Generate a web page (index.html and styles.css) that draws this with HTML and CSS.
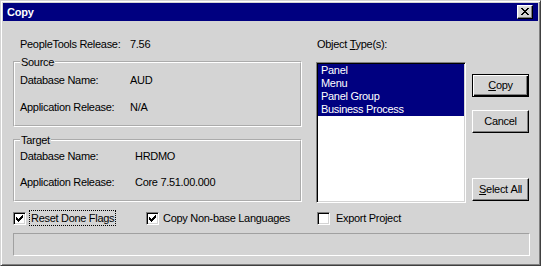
FILE: index.html
```html
<!DOCTYPE html>
<html lang="en">
<head>
<meta charset="utf-8">
<title>Copy</title>
<link rel="stylesheet" href="styles.css">
</head>
<body>
<div class="window">
  <div class="titlebar">
    <span class="title">Copy</span>
    <button class="close" aria-label="Close">
      <svg width="8" height="7" viewBox="0 0 8 7" shape-rendering="crispEdges"><path d="M0 0h2v1h-2zM6 0h2v1h-2zM1 1h2v1h-2zM5 1h2v1h-2zM2 2h4v1h-4zM3 3h2v1h-2zM2 4h4v1h-4zM1 5h2v1h-2zM5 5h2v1h-2zM0 6h2v1h-2zM6 6h2v1h-2z" fill="#000"/></svg>
    </button>
  </div>
  <div class="client">
    <div class="top">
      <div class="left">
        <div class="row info"><span class="lbl lbl-info">PeopleTools Release:</span><span>7.56</span></div>
        <fieldset class="group source">
          <legend>Source</legend>
          <div class="row"><span class="lbl lbl-src">Database Name:</span><span>AUD</span></div>
          <div class="row row-2"><span class="lbl lbl-src">Application Release:</span><span>N/A</span></div>
        </fieldset>
        <fieldset class="group target">
          <legend>Target</legend>
          <div class="row"><span class="lbl lbl-tgt">Database Name:</span><span>HRDMO</span></div>
          <div class="row row-2t"><span class="lbl lbl-tgt">Application Release:</span><span>Core 7.51.00.000</span></div>
        </fieldset>
      </div>
      <div class="right">
        <div class="row otype"><span>Object&nbsp;<u>T</u>ype(s):</span></div>
        <div class="listarea">
          <ul class="listbox">
            <li class="sel">Panel</li>
            <li class="sel">Menu</li>
            <li class="sel">Panel Group</li>
            <li class="sel">Business Process</li>
          </ul>
          <div class="buttons">
            <button class="btn default"><u>C</u>opy</button>
            <button class="btn cancel">Cancel</button>
            <button class="btn selall"><u>S</u>elect&nbsp;All</button>
          </div>
        </div>
      </div>
    </div>
    <div class="checks">
      <div class="check c1">
        <span class="box"><svg width="7" height="7" viewBox="0 0 7 7" shape-rendering="crispEdges"><path d="M6 0h1v1h-1zM5 1h2v1h-2zM0 2h1v1h-1zM4 2h3v1h-3zM0 3h2v1h-2zM3 3h3v1h-3zM0 4h5v1h-5zM1 5h3v1h-3zM2 6h1v1h-1z" fill="#000"/></svg></span>
        <span class="clabel focus">Reset Done Flags</span>
      </div>
      <div class="check c2">
        <span class="box"><svg width="7" height="7" viewBox="0 0 7 7" shape-rendering="crispEdges"><path d="M6 0h1v1h-1zM5 1h2v1h-2zM0 2h1v1h-1zM4 2h3v1h-3zM0 3h2v1h-2zM3 3h3v1h-3zM0 4h5v1h-5zM1 5h3v1h-3zM2 6h1v1h-1z" fill="#000"/></svg></span>
        <span class="clabel">Copy Non-base Languages</span>
      </div>
      <div class="check c3">
        <span class="box"></span>
        <span class="clabel">Export Project</span>
      </div>
    </div>
    <div class="status"></div>
  </div>
</div>
</body>
</html>
```
FILE: styles.css
```css
html, body {
  margin: 0;
  padding: 0;
  background: #ffffff;
}

body {
  font-family: "Liberation Sans", Arial, sans-serif;
  font-size: 11px;
  letter-spacing: -0.3px;
  color: #000;
}

.window {
  width: 541px;
  height: 266px;
  box-sizing: border-box;
  background: #d4d4d4;
  border: 1px solid;
  border-color: #d4d4d4 #404040 #404040 #d4d4d4;
  box-shadow: inset 1px 1px #ffffff, inset -1px -1px #808080;
  padding: 2px;
  display: flex;
  flex-direction: column;
}

.titlebar {
  height: 18px;
  background: #000080;
  display: flex;
  align-items: center;
  padding: 0 5px 0 4px;
}

.title {
  flex: 1;
  color: #fff;
  font-weight: bold;
  font-size: 11px;
  letter-spacing: -0.2px;
  line-height: 13px;
}

.close {
  width: 16px;
  height: 14px;
  box-sizing: border-box;
  padding: 0;
  margin: 0;
  background: #d4d4d4;
  border: 1px solid;
  border-color: #fff #000 #000 #fff;
  box-shadow: inset -1px -1px #808080, inset 1px 1px #dfdfdf;
  display: flex;
  align-items: center;
  justify-content: center;
}

.close svg {
  display: block;
  margin: 0 1px 1px 0;
}

.client {
  flex: 1;
  padding: 17px 9px 0 10px;
  display: flex;
  flex-direction: column;
}

.top {
  display: flex;
}

.left {
  width: 289px;
  display: flex;
  flex-direction: column;
}

.row {
  height: 13px;
  line-height: 13px;
  display: flex;
  white-space: nowrap;
}

.info {
  padding-left: 7px;
}

.lbl-info { width: 110px; }
.lbl-src { width: 110px; }
.lbl-tgt { width: 115px; }

.group {
  margin: 0;
  min-width: 0;
  border: 2px groove #ffffff;
  padding: 6px 6px 11px 5px;
}

.group legend {
  padding: 0 1px;
  line-height: 12px;
  height: 12px;
}

.source {
  margin-top: 5px;
}

.source .row-2 {
  margin-top: 14px;
}

.target {
  margin-top: 7px;
  padding-top: 4px;
}

.target .row-2t {
  margin-top: 13px;
}

.right {
  margin-left: 14px;
  width: 213px;
  display: flex;
  flex-direction: column;
}

.otype {
  padding-left: 1px;
}

.listarea {
  margin-top: 11px;
  display: flex;
}

.listbox {
  margin: 0;
  list-style: none;
  width: 150px;
  height: 141px;
  box-sizing: border-box;
  background: #fff;
  border: 1px solid;
  border-color: #808080 #fff #fff #808080;
  box-shadow: inset 1px 1px #000, inset -1px -1px #d4d4d4;
  padding: 1px;
}

.listbox li {
  height: 13px;
  line-height: 13px;
  padding-left: 3px;
}

.listbox li.sel {
  background: #000080;
  color: #fff;
}

.buttons {
  margin-left: 6px;
  width: 57px;
  display: flex;
  flex-direction: column;
  padding: 12px 0 2px;
}

.btn {
  width: 57px;
  height: 23px;
  box-sizing: border-box;
  margin: 0;
  padding: 0 0 1px;
  font-family: inherit;
  font-size: 11px;
  letter-spacing: -0.3px;
  color: #000;
  background: #d4d4d4;
  border: 1px solid;
  border-color: #fff #000 #000 #fff;
  box-shadow: inset -1px -1px #808080, inset 1px 1px #d4d4d4;
}

.btn.default {
  border: 1px solid #000;
  box-shadow: inset 1px 1px #fff, inset -1px -1px #000, inset -2px -2px #808080;
}

.cancel {
  margin-top: 13px;
}

.selall {
  margin-top: auto;
}

.checks {
  margin-top: 7px;
  height: 16px;
  display: flex;
  align-items: center;
}

.check {
  display: flex;
  align-items: center;
}

.c1 { width: 133px; }
.c2 { width: 171px; }

.box {
  width: 13px;
  height: 13px;
  box-sizing: border-box;
  background: #fff;
  border: 1px solid;
  border-color: #808080 #fff #fff #808080;
  box-shadow: inset 1px 1px #000, inset -1px -1px #d4d4d4;
  padding: 2px 0 0 2px;
  flex: none;
}

.box svg {
  display: block;
}

.clabel {
  line-height: 14px;
  padding: 0 1px;
  border: 1px solid transparent;
  white-space: nowrap;
}

.c1 .clabel { margin-left: 3px; }
.c2 .clabel { margin-left: 2px; }
.c3 .clabel { margin-left: 4px; }

.clabel.focus {
  border: 1px dotted #000;
}

.status {
  margin-top: 7px;
  width: 517px;
  height: 23px;
  box-sizing: border-box;
  border: 1px solid;
  border-color: #a0a0a0 #fff #fff #a0a0a0;
}
```
